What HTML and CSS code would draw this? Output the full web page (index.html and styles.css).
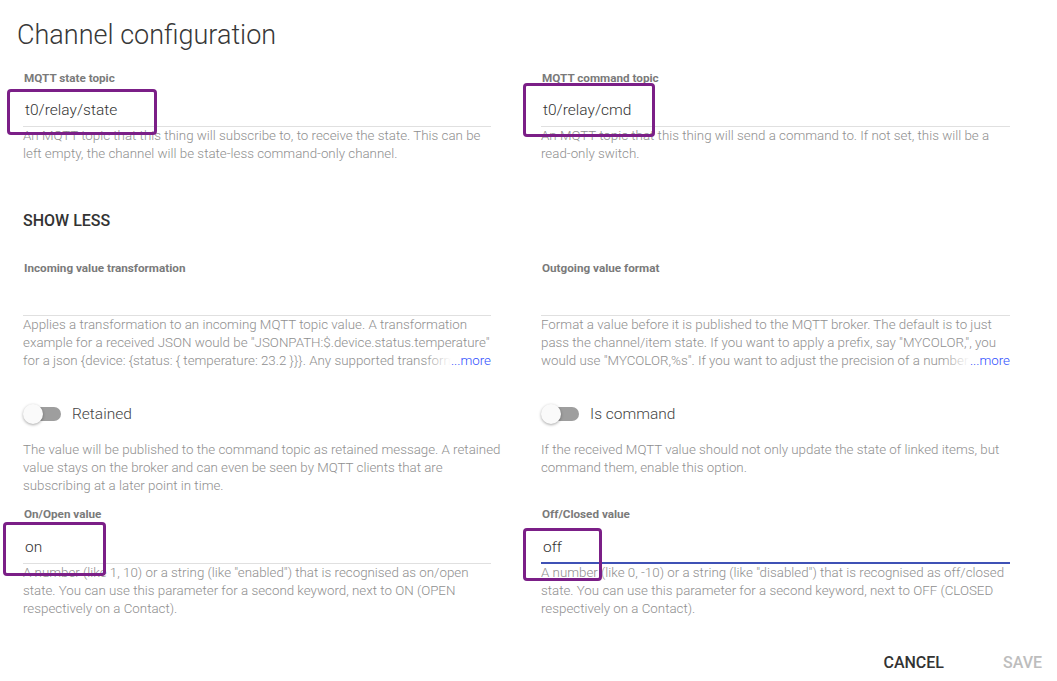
FILE: index.html
```html
<!DOCTYPE html>
<html>
<head>
<meta charset="utf-8">
<link rel="stylesheet" href="styles.css">
</head>
<body>
<div class="dialog">
  <h1 class="title">Channel configuration</h1>
  <div class="grid row1">
    <div class="field">
      <div class="label">MQTT state topic</div>
      <div class="input">t0/relay/state</div>
      <div class="desc">An MQTT topic that this thing will subscribe to, to receive the state. This can be left empty, the channel will be state-less command-only channel.</div>
      <div class="mark mark1"></div>
    </div>
    <div class="field">
      <div class="label">MQTT command topic</div>
      <div class="input">t0/relay/cmd</div>
      <div class="desc">An MQTT topic that this thing will send a command to. If not set, this will be a read-only switch.</div>
      <div class="mark mark2"></div>
    </div>
  </div>

  <div class="showless">SHOW LESS</div>

  <div class="grid row2">
    <div class="field">
      <div class="label">Incoming value transformation</div>
      <div class="input"></div>
      <div class="desc clamp">Applies a transformation to an incoming MQTT topic value. A transformation example for a received JSON would be "JSONPATH:$.device.status.temperature" for a json {device: {status: { temperature: 23.2 }}}. Any supported transformation service can be used (e.g. LUA, REGEX, XPATH). You can chain transformations.<span class="more">...more</span></div>
    </div>
    <div class="field">
      <div class="label">Outgoing value format</div>
      <div class="input"></div>
      <div class="desc clamp">Format a value before it is published to the MQTT broker. The default is to just pass the channel/item state. If you want to apply a prefix, say "MYCOLOR,", you would use "MYCOLOR,%s". If you want to adjust the precision of a number to two digits, you would use "%.2f".<span class="more">...more</span></div>
    </div>
  </div>

  <div class="grid row3">
    <div class="field">
      <div class="toggle"><span class="track"><span class="knob"></span></span><span class="tlabel">Retained</span></div>
      <div class="desc tdesc">The value will be published to the command topic as retained message. A retained value stays on the broker and can even be seen by MQTT clients that are subscribing at a later point in time.</div>
    </div>
    <div class="field">
      <div class="toggle"><span class="track"><span class="knob"></span></span><span class="tlabel">Is command</span></div>
      <div class="desc tdesc">If the received MQTT value should not only update the state of linked items, but command them, enable this option.</div>
    </div>
  </div>

  <div class="grid row4">
    <div class="field">
      <div class="label">On/Open value</div>
      <div class="input">on</div>
      <div class="desc">A number (like 1, 10) or a string (like "enabled") that is recognised as on/open state. You can use this parameter for a second keyword, next to ON (OPEN respectively on a Contact).</div>
      <div class="mark mark3"></div>
    </div>
    <div class="field">
      <div class="label">Off/Closed value</div>
      <div class="input focused">off</div>
      <div class="desc">A number (like 0, -10) or a string (like "disabled") that is recognised as off/closed state. You can use this parameter for a second keyword, next to OFF (CLOSED respectively on a Contact).</div>
      <div class="mark mark4"></div>
    </div>
  </div>

  <div class="actions">
    <span class="btn cancel">CANCEL</span>
    <span class="btn save">SAVE</span>
  </div>
</div>
</body>
</html>
```
FILE: styles.css
```css
html, body {
  margin: 0;
  padding: 0;
  background: #fff;
}
body {
  font-family: Roboto, "Noto Sans", sans-serif;
  color: #212121;
  overflow: hidden;
}
.dialog {
  width: 1057px;
  height: 681px;
  box-sizing: border-box;
}
.title {
  margin: 0;
  padding: 17px 0 0 17px;
  font-size: 27px;
  line-height: 36px;
  font-weight: 300;
  color: #383838;
}
.grid {
  display: grid;
  grid-template-columns: 468px 469px;
  column-gap: 50px;
  padding-left: 23px;
}
.row1 { margin-top: 18px; }
.row2 { margin-top: 0; }
.row3 { margin-top: 32px; }
.row4 { margin-top: 12px; }
.field {
  position: relative;
}
.label {
  font-size: 11.7px;
  line-height: 14px;
  font-weight: 700;
  color: #7a7a7a;
  padding-left: 1px;
}
.input {
  margin-top: 8px;
  height: 32px;
  line-height: 32px;
  font-size: 15.5px;
  font-weight: 300;
  color: #333;
  padding-left: 2px;
  border-bottom: 1px solid #e0e0e0;
}
.row1 .input {
  margin-top: 9px;
}
.row4 .input {
  margin-top: 10px;
}
.input.focused {
  border-bottom: 2px solid #3f51b5;
  height: 31px;
}
.desc {
  font-size: 13.33px;
  line-height: 18px;
  font-weight: 300;
  color: #8f8f8f;
  margin-right: -10px;
}
.clamp {
  position: relative;
  height: 54px;
  overflow: hidden;
}
.more {
  position: absolute;
  right: 10px;
  bottom: 0;
  height: 18px;
  width: 66px;
  text-align: right;
  color: #304ffe;
  background: linear-gradient(to right, rgba(255,255,255,0), #fff 26px);
}
.more::after {
  content: "";
  position: absolute;
  left: 66px;
  top: 0;
  width: 10px;
  height: 18px;
  background: #fff;
}
.showless {
  margin: 48px 0 30px 23px;
  font-size: 16px;
  line-height: 20px;
  font-weight: 500;
  color: #333;
}
.toggle {
  display: flex;
  align-items: center;
  height: 24px;
}
.track {
  position: relative;
  width: 34px;
  height: 14px;
  border-radius: 7px;
  background: #9e9e9e;
  margin-left: 4px;
}
.knob {
  position: absolute;
  left: -4px;
  top: -3px;
  width: 20px;
  height: 20px;
  border-radius: 50%;
  background: #fafafa;
  box-shadow: 0 1px 3px rgba(0,0,0,0.35);
}
.tlabel {
  margin-left: 11px;
  font-size: 15.5px;
  color: #444;
  font-weight: 300;
}
.tdesc {
  margin-top: 15px;
}
.mark {
  position: absolute;
  border: 3px solid #7b1f87;
  border-radius: 4px;
  box-sizing: border-box;
}
.mark1 { left: -16px; top: 18px; width: 150px; height: 46px; }
.mark2 { left: -18px; top: 12px; width: 132px; height: 54px; }
.mark3 { left: -20px; top: 15px; width: 103px; height: 54px; }
.mark4 { left: -18px; top: 21px; width: 79px; height: 53px; }
.actions {
  display: flex;
  justify-content: flex-end;
  gap: 59px;
  margin-top: 35px;
  padding-right: 15px;
}
.btn {
  font-size: 16px;
  line-height: 20px;
  font-weight: 500;
}
.cancel { color: #333; }
.save { color: #bdbdbd; }
```
